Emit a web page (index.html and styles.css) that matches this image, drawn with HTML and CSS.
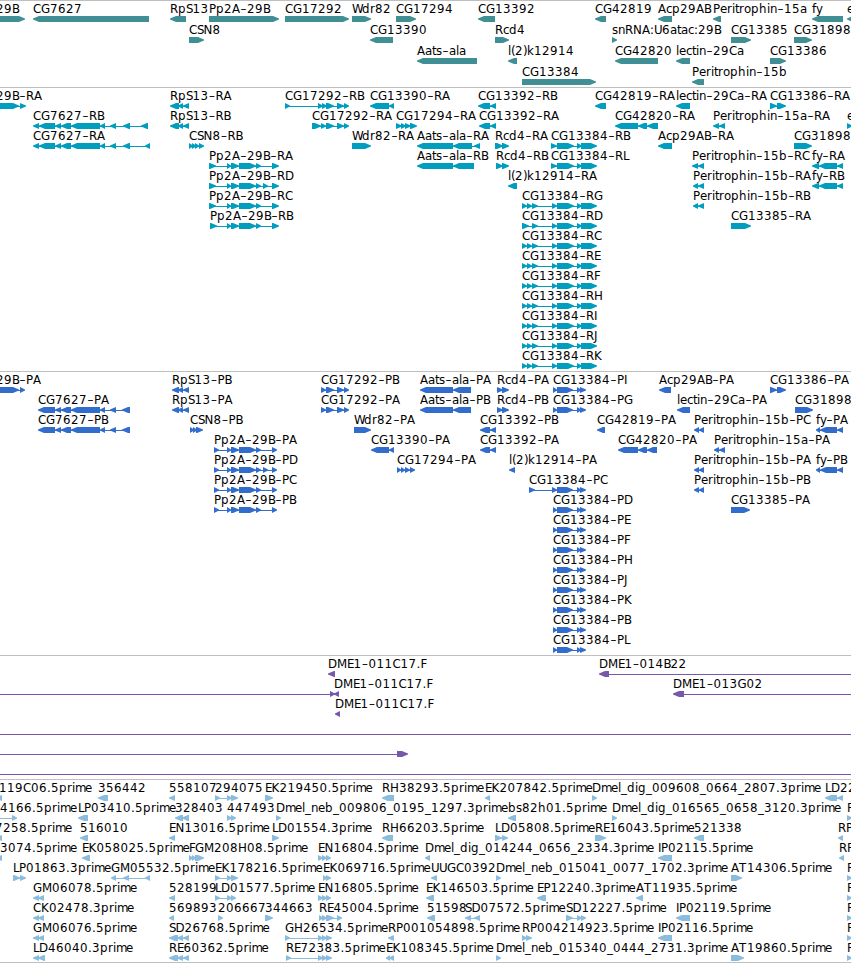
FILE: index.html
```html
<!DOCTYPE html>
<html lang="en">
<head>
    <meta charset="UTF-8">
    <title>Genome Browser</title>
    <link rel="stylesheet" href="styles.css">
</head>
<body>
    <main class="browser">
        <section class="track genes" id="genes"></section>
        <section class="track transcripts" id="transcripts"></section>
        <section class="track proteins" id="proteins"></section>
        <section class="track clones" id="clones"></section>
        <section class="track ests" id="ests"></section>
    </main>

    <script src="tracks.js"></script>
</body>
</html>
```
FILE: styles.css
```css
:root {
    --gene-color: #3f8f94;
    --transcript-color: #009dbf;
    --protein-color: #326dcc;
    --clone-color: #7858a8;
    --est-color: #8abddd;
    --line-color: #bfbfbf;
}

* {
    margin: 0;
    padding: 0;
    box-sizing: border-box;
}

body {
    background-color: #fff;
    overflow: hidden;
}

.browser {
    border-bottom: 1px solid var(--line-color);
}

.track {
    border-top: 1px solid var(--line-color);
    overflow: hidden;
}

.track svg {
    display: block;
    width: 100%;
    height: 100%;
}

.track text {
    font-family: "DejaVu Sans", sans-serif;
    font-size: 11.8px;
    fill: #000;
}

.track line {
    stroke: currentColor;
    stroke-width: 1;
}

.track polygon {
    fill: currentColor;
}

.genes {
    height: 87px;
    color: var(--gene-color);
}

.transcripts {
    height: 284px;
    color: var(--transcript-color);
}

.proteins {
    height: 284px;
    color: var(--protein-color);
}

.clones {
    height: 124px;
    color: var(--clone-color);
}

.ests {
    height: 183px;
    color: var(--est-color);
}
```
FILE: tracks.js
```js
// Feature format: labelX label strand start:end start:end ...
// One line per feature, an empty line starts the next row. "." = no label
const tracks = {
    genes: { pitch: 21, data: `
-4 29B > -20:25
33 CG7627 < 33:149
170 RpS13 < 170:186
209 Pp2A-29B > 209:279
285 CG17292 > 285:349
352 Wdr82 > 352:371
396 CG17294 > 396:416
478 CG13392 < 478:495
595 CG42819 < 595:606
658 Acp29AB < 658:672
713 Peritrophin-15a < 713:721
812 fy < 812:843
847 e < 847:870

189 CSN8 > 189:204
370 CG13390 < 370:393
495 Rcd4 > 495:509
612 snRNA:U6atac:29B > 612:617
731 CG13385 > 731:751
794 CG31898 > 794:812

417 Aats-ala < 417:477
508 l(2)k12914 < 508:517
615 CG42820 < 615:658
676 lectin-29Ca < 676:690
770 CG13386 > 770:786

522 CG13384 > 522:596
692 Peritrophin-15b < 692:704` },

    transcripts: { pitch: 20, data: `
-4 29B-RA > -20:19 20:26
170 RpS13-RA < 170:179 178:183 183:189
285 CG17292-RB > 285:290 318:323 322:327 326:334 337:344 344:349
370 CG13390-RA < 370:389 389:394
478 CG13392-RB < 478:490 490:496
595 CG42819-RA < 595:606
676 lectin-29Ca-RA < 676:690
770 CG13386-RA > 770:777 777:786

33 CG7627-RB < 33:39 39:55 55:61 61:71 71:100 100:105 110:116 123:130 141:148
170 RpS13-RB < 170:179 178:183 183:189
312 CG17292-RA > 312:321 321:326 326:334 337:344 344:349
396 CG17294-RA > 396:402 401:406 405:411 410:417
479 CG13392-RA < 479:490 490:496
615 CG42820-RA < 615:638 638:647 647:658
713 Peritrophin-15a-RA < 713:719 719:725
847 e > 847:852

33 CG7627-RA < 33:39 39:55 55:61 61:71 71:100 100:105 110:116 123:130 145:150
189 CSN8-RB > 189:193 192:196 195:199 199:204
352 Wdr82-RA > 352:371
417 Aats-ala-RA < 417:453 453:472 474:480
495 Rcd4-RA > 495:503 502:509
551 CG13384-RB > 551:557 557:574 577:582 581:597
658 Acp29AB-RA < 658:672
794 CG31898 > 794:812

209 Pp2A-29B-RA > 209:216 227:231 231:239 239:256 256:261 272:279
417 Aats-ala-RB < 417:453 453:474
496 Rcd4-RB > 496:503 502:509
551 CG13384-RL > 551:557 557:574 577:582 581:597
692 Peritrophin-15b-RC < 692:698 698:704
812 fy-RA < 812:819 819:837 837:843

209 Pp2A-29B-RD > 209:216 227:231 231:239 239:256 256:261 263:268 272:279
508 l(2)k12914-RA < 508:517
693 Peritrophin-15b-RA < 693:698 698:704
812 fy-RB < 812:819 819:837 837:843

209 Pp2A-29B-RC > 209:216 227:231 231:239 239:256 256:261 272:279
522 CG13384-RG > 522:527 527:532 532:538 552:557 557:574 577:582 581:597
693 Peritrophin-15b-RB < 693:698 698:704

210 Pp2A-29B-RB > 210:217 227:231 231:239 239:256 256:261 272:279
522 CG13384-RD > 522:529 532:538 552:557 557:574 577:582 581:597
731 CG13385-RA > 731:751

522 CG13384-RC > 522:527 527:532 532:538 552:557 557:574 577:582 581:597

522 CG13384-RE > 522:527 527:532 532:538 552:557 557:574 577:582 581:597

522 CG13384-RF > 522:527 527:532 532:538 552:557 557:574 577:582 581:597

522 CG13384-RH > 522:527 527:532 532:538 552:557 557:574 577:582 581:597

522 CG13384-RI > 522:527 527:532 532:538 552:557 557:574 577:582 581:597

522 CG13384-RJ > 522:527 527:532 532:538 552:557 557:574 577:582 581:597

522 CG13384-RK > 522:527 527:532 532:538 552:557 557:574 577:582 581:597` },

    proteins: { pitch: 20, data: `
-4 29B-PA > -20:19 20:25
172 RpS13-PB < 172:179 178:183 183:189
321 CG17292-PB > 321:326 326:334 337:344 344:349
420 Aats-ala-PA < 420:453 453:471
497 Rcd4-PA > 497:503 502:509
553 CG13384-PI > 553:557 557:573 577:581 580:586
659 Acp29AB-PA < 659:671
770 CG13386-PA > 770:777 777:786

38 CG7627-PA < 38:55 55:61 61:71 71:100 100:105 110:116 122:130
172 RpS13-PA < 172:179 178:183 183:189
321 CG17292-PA > 321:326 326:334 337:344 344:349
420 Aats-ala-PB < 420:453 453:471
497 Rcd4-PB > 497:503 502:509
553 CG13384-PG > 553:557 557:573 577:581 580:586
677 lectin-29Ca-PA < 677:690
795 CG31898 > 795:813

38 CG7627-PB < 38:55 55:61 61:71 71:100 100:105 110:116 122:130
190 CSN8-PB > 190:194 193:197 196:203
354 Wdr82-PA > 354:371
480 CG13392-PB < 480:490 490:496
597 CG42819-PA < 597:605
694 Peritrophin-15b-PC < 694:699 699:704
816 fy-PA < 816:820 820:837 837:843

214 Pp2A-29B-PA > 214:219 227:231 231:239 239:256 256:261 272:277
371 CG13390-PA < 371:389 389:394
480 CG13392-PA < 480:490 490:496
618 CG42820-PA < 618:638 638:647 647:657
714 Peritrophin-15a-PA < 714:719 719:725

214 Pp2A-29B-PD > 214:219 227:231 231:239 239:256 256:261 263:268 272:277
397 CG17294-PA > 397:401 401:405 405:410 410:415
509 l(2)k12914-PA < 509:515
694 Peritrophin-15b-PA < 694:699 699:704
816 fy-PB < 816:820 820:837 837:843

214 Pp2A-29B-PC > 214:219 227:231 231:239 239:256 256:261 272:277
529 CG13384-PC > 529:535 552:557 557:573 577:581 580:586
694 Peritrophin-15b-PB < 694:699 699:704

214 Pp2A-29B-PB > 214:219 227:231 231:239 239:256 256:261 272:277
553 CG13384-PD > 553:557 557:573 577:581 580:586
731 CG13385-PA > 731:750

553 CG13384-PE > 553:557 557:573 577:581 580:586

553 CG13384-PF > 553:557 557:573 577:581 580:586

553 CG13384-PH > 553:557 557:573 577:581 580:586

553 CG13384-PJ > 553:557 557:573 577:581 580:586

553 CG13384-PK > 553:557 557:573 577:581 580:586

553 CG13384-PB > 553:557 557:573 577:581 580:586

553 CG13384-PL > 553:557 557:573 577:581 580:586` },

    clones: { pitch: 20, data: `
328 DME1-011C17.F < 328:335
599 DME1-014B22 < 599:609 870:880

0 . > -20:-10 330:335
334 DME1-011C17.F < 334:339
673 DME1-013G02 < 673:684 870:880

335 DME1-011C17.F < 335:340

0 . > -20:-10 870:880

0 . > -20:-10 397:408

0 . > -20:-10 870:880` },

    ests: { pitch: 20, data: `
-1 119C06.5prime < -4:2
98 356442 < 98:108
169 558107 < 169:175
215 294075 > 215:220 227:232 231:238
265 EK219450.5prime > 265:273
382 RH38293.5prime < 382:394
485 EK207842.5prime < 485:490
592 Dmel_dig_009608_0664_2807.3prime > 592:597
825 LD22 < 825:837 837:843

0 4166.5prime > -8:-2 12:17
78 LP03410.5prime < 78:88
175 328403 < 175:183 182:189
227 447493 > 227:232 231:236
276 Dmel_neb_009806_0195_1297.3prime > 276:281
508 bs82h01.5prime < 508:516
612 Dmel_dig_016565_0658_3120.3prime > 612:617
847 R > 847:852

-5 7258.5prime < -4:2
80 516010 < 80:88
169 EN13016.5prime < 169:175
272 LD01554.3prime > 272:279
382 RH66203.5prime < 382:393
495 LD05808.5prime > 495:502 502:508
595 RE16043.5prime > 595:606
694 521338 < 694:704
838 RP < 838:843

0 3074.5prime < -4:2
82 EK058025.5prime < 82:90
189 FGM208H08.5prime > 189:193 192:196 195:204
318 EN16804.5prime > 318:323 322:327 326:331
425 Dmel_dig_014244_0656_2334.3prime < 425:430
658 IP02115.5prime < 658:672
839 RP < 839:844

13 LP01863.3prime > 13:20 20:26
111 GM05532.5prime < 111:116 123:129 145:150
215 EK178216.5prime > 215:220 227:232 231:238
323 EK069716.5prime > 323:327 326:331
431 UUGC0392 < 431:437
496 Dmel_neb_015041_0077_1702.3prime > 496:501
731 AT14306.5prime > 731:742
847 R > 847:852

33 GM06078.5prime < 33:39 38:44
169 528199 < 169:175
215 LD01577.5prime > 215:220 227:232 231:236
318 EN16805.5prime > 318:323 322:327 326:331
426 EK146503.5prime < 426:434
537 EP12240.3prime < 537:546
636 AT11935.5prime < 636:643
847 R > 847:852

33 CK02478.3prime < 33:39 38:44
169 569893 < 169:174
218 206667 > 218:223
265 344663 > 265:273
319 RE45004.5prime > 319:323 322:327 326:334 337:342
427 51598 < 427:435
465 SD07572.5prime < 465:471 474:480
566 SD12227.5prime > 566:573 577:582 581:586
676 IP02119.5prime < 676:690
847 R > 847:852

33 GM06076.5prime < 33:39 38:44
169 SD26768.5prime < 169:178 177:183 183:189
285 GH26534.5prime > 285:290 318:323 322:327 326:332
388 RP001054898.5prime < 388:394
522 RP004214923.5prime > 522:527 526:532
658 IP02116.5prime < 658:672
847 R > 847:852

33 LD46040.3prime < 33:39 38:45
169 RE60362.5prime < 169:178 177:183 183:189
286 RE72383.5prime > 286:291 318:323 322:327 326:332
386 EK108345.5prime < 386:390 389:394
496 Dmel_neb_015340_0444_2731.3prime > 496:501
731 AT19860.5prime > 731:744
847 R > 847:852` }
};

// whole pixel glyph advances, anything not listed is 8
const advances = {
    B: 7, D: 9, E: 6.5, F: 6, G: 9, H: 9, I: 3, J: 4, L: 6, M: 10, N: 9, P: 7,
    S: 6.5, W: 10, a: 7, c: 6, e: 7, f: 4, i: 3, k: 7, l: 3,
    m: 10, n: 7, o: 7, r: 5, s: 6, t: 4, u: 7, v: 6, y: 6,
    _: 6, '.': 4, ':': 4, '(': 4, ')': 4, '-': 7
};

function drawLabel(x, y, label) {
    const xs = [];
    for (const ch of label) {
        xs.push(ch === '-' ? x + 0.5 : x);
        x += advances[ch] || 8;
    }
    // long hyphen
    return `<text x="${xs.join(' ')}" y="${y}">${label.replace(/-/g, '–')}</text>`;
}

function drawBlock(a, b, y, strand) {
    const head = Math.min(b - a, 6);
    const tip = strand === '>' ? b : a;
    const back = strand === '>' ? a : b;
    const neck = strand === '>' ? b - head : a + head;
    return `<polygon points="${back},${y} ${neck},${y} ${tip},${y + 2.5} ${tip},${y + 3.5} ${neck},${y + 6} ${back},${y + 6}"/>`;
}

for (const id in tracks) {
    const { pitch, data } = tracks[id];
    let shapes = '';
    let labels = '';

    data.trim().split('\n\n').forEach((row, i) => {
        const top = i * pitch;
        row.split('\n').forEach(line => {
            const [x, label, strand, ...parts] = line.split(' ');
            const blocks = parts.map(p => p.split(':').map(Number));
            if (blocks.length > 1) {
                shapes += `<line x1="${blocks[0][0] + 1}" x2="${blocks[blocks.length - 1][1] - 1}" y1="${top + 18.5}" y2="${top + 18.5}"/>`;
            }
            blocks.forEach(([a, b]) => {
                shapes += drawBlock(a, b, top + 15, strand);
            });
            if (label !== '.') {
                labels += drawLabel(Number(x), top + 12, label);
            }
        });
    });

    document.getElementById(id).innerHTML = `<svg>${shapes}${labels}</svg>`;
}
```
